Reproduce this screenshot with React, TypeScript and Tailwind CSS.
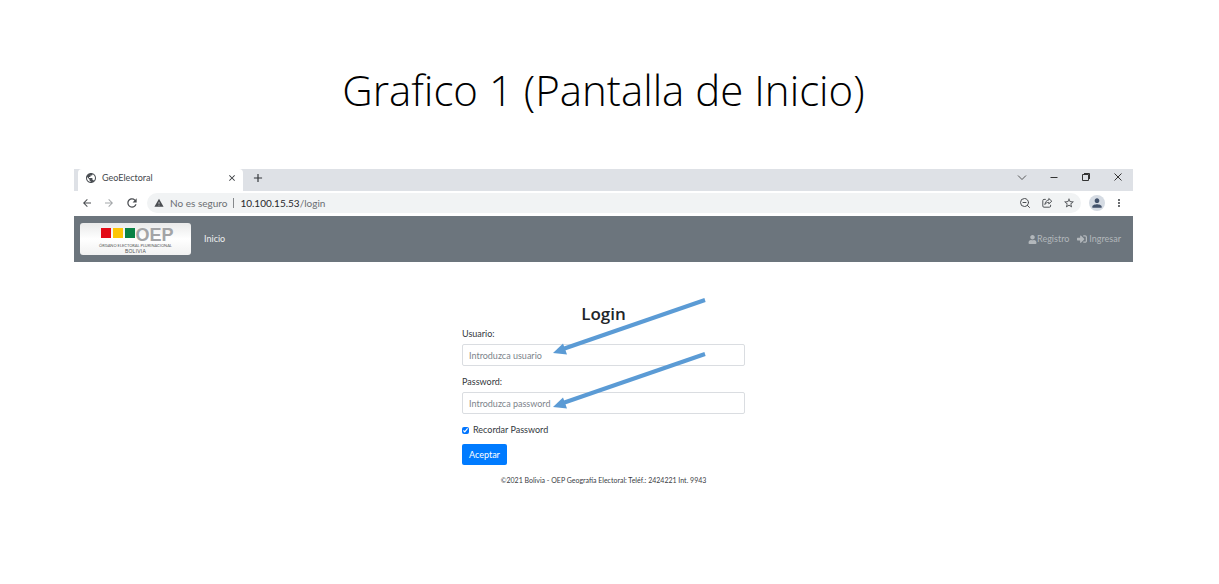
import { useState } from "react";
import {
  MdArrowBack,
  MdArrowForward,
  MdRefresh,
  MdPublic,
  MdClose,
  MdAdd,
  MdWarning,
  MdPerson,
  MdMoreVert,
  MdStarOutline,
} from "react-icons/md";
import { FaSignInAlt, FaUser } from "react-icons/fa";
import { ZoomOut } from "lucide-react";

function ShareIcon() {
  return (
    <svg viewBox="0 0 20 20" className="size-3" fill="none" stroke="currentColor" strokeWidth="1.6">
      <path d="M8 4H5a2 2 0 0 0-2 2v9a2 2 0 0 0 2 2h9a2 2 0 0 0 2-2v-2" />
      <path d="M13 2.5 18 7l-5 4.5V9c-3 0-5 1-6.500 3.500C7 8.500 9 5.500 13 5z" strokeLinejoin="round" />
    </svg>
  );
}

function TabStrip() {
  return (
    <div className="flex h-[22px] items-stretch justify-between bg-[#dee1e6]">
      <div className="flex items-stretch">
        <div className="ml-1 flex w-[165px] items-center rounded-t bg-white pr-1.5 pb-1 pl-[7px]">
          <MdPublic className="size-3 text-[#4b4f54]" />
          <span className="ml-[5px] flex-1 text-[9px] leading-3 text-[#45494d]">GeoElectoral</span>
          <button aria-label="Cerrar" className="text-[#33363a]">
            <MdClose className="size-2.5" />
          </button>
        </div>
        <button aria-label="Nueva pestaña" className="ml-2 pb-1 text-[#33363a]">
          <MdAdd className="size-3.5" />
        </button>
      </div>
      <div className="mr-[9px] mb-1.5 flex items-center gap-5 text-[#333]">
        <button aria-label="Buscar pestañas">
          <svg viewBox="0 0 12 12" className="size-3" fill="none" stroke="currentColor">
            <path d="M2 4.500l4 4 4-4" strokeWidth="0.8" />
          </svg>
        </button>
        <button aria-label="Minimizar">
          <svg viewBox="0 0 12 12" className="size-3" fill="none" stroke="currentColor">
            <path d="M2.500 6.500h7" />
          </svg>
        </button>
        <button aria-label="Restaurar">
          <svg viewBox="0 0 12 12" className="size-3" fill="none" stroke="currentColor">
            <path d="M2.500 3.500h6v6h-6zM4 2.500h5.500v5.500" />
          </svg>
        </button>
        <button aria-label="Cerrar ventana">
          <svg viewBox="0 0 12 12" className="size-3" fill="none" stroke="currentColor">
            <path d="M2.500 2.500l7 7M9.500 2.500l-7 7" />
          </svg>
        </button>
      </div>
    </div>
  );
}

function AddressBar() {
  return (
    <div className="flex h-[25px] items-center bg-white pr-2 pb-px pl-[7px] text-[#4a4d51]">
      <div className="flex items-center gap-2.5">
        <button aria-label="Atrás">
          <MdArrowBack className="size-3" />
        </button>
        <button aria-label="Adelante" className="text-[#a4a7aa]">
          <MdArrowForward className="size-3" />
        </button>
        <button aria-label="Recargar">
          <MdRefresh className="size-3.5" />
        </button>
      </div>
      <div className="ml-2 flex h-5 flex-1 items-center rounded-full bg-[#f1f3f4] pr-1.5 pl-[7px] text-[10px]">
        <MdWarning className="size-2.5" />
        <span className="ml-1.5 whitespace-nowrap text-[#6b6e72]">No es seguro</span>
        <span className="mx-1.5 h-2.5 w-px bg-[#85888b]" />
        <span className="flex-1 text-[#6b6e72]">
          <span className="text-[#26282b]">10.100.15.53</span>/login
        </span>
        <div className="flex items-center gap-2.5">
          <button aria-label="Alejar">
            <ZoomOut className="size-3" />
          </button>
          <button aria-label="Compartir">
            <ShareIcon />
          </button>
          <button aria-label="Favorito">
            <MdStarOutline className="size-3" />
          </button>
        </div>
      </div>
      <button
        aria-label="Perfil"
        className="ml-2 flex size-4 items-center justify-center rounded-full bg-[#d5dbe3] text-[#42526b]"
      >
        <MdPerson className="size-3.5" />
      </button>
      <button aria-label="Menú" className="ml-2">
        <MdMoreVert className="size-3" />
      </button>
    </div>
  );
}

function Brand() {
  return (
    <a
      href="#inicio"
      className="flex h-8 w-[111px] flex-col items-center justify-center rounded-[3px] bg-linear-to-b from-[#e9eaea] via-white to-[#f1f1f1]"
    >
      <span className="mt-0.5 flex h-4 items-center pl-1">
        <span className="mb-1 flex gap-0.5">
          <span className="size-2.5 bg-[#e30b17]" />
          <span className="size-2.5 bg-[#fdc506]" />
          <span className="size-2.5 bg-[#0a8245]" />
        </span>
        <span className="font-['Liberation_Sans',sans-serif] text-[18px] leading-4 font-bold text-[#a3a4a6]">
          OEP
        </span>
      </span>
      <span className="font-['Lato',sans-serif] text-[4px] leading-[5px] whitespace-nowrap text-[#55585a]">
        ÓRGANO ELECTORAL PLURINACIONAL
      </span>
      <span className="font-['Liberation_Sans',sans-serif] text-[5px] leading-[6px] tracking-wider text-[#555]">
        BOLIVIA
      </span>
    </a>
  );
}

function Navbar() {
  return (
    <nav className="flex h-[46px] items-center bg-[#6c757d] pr-3 pl-[6px] text-[9px] text-[#b2b7bb]">
      <Brand />
      <a href="#inicio" className="ml-[13px] flex-1 text-[#eceeef]">
        Inicio
      </a>
      <a href="#registro" className="flex items-center">
        <FaUser className="size-[9px]" />
        Registro
      </a>
      <a href="#ingresar" className="ml-2 flex items-center gap-0.5">
        <FaSignInAlt className="size-[10px]" />
        Ingresar
      </a>
    </nav>
  );
}

function Arrows() {
  return (
    <svg
      viewBox="0 0 156 112"
      aria-hidden="true"
      className="pointer-events-none absolute top-0 left-[91px] h-28 w-[156px]"
      fill="#5b9bd5"
      stroke="#5b9bd5"
    >
      {[0, 54].map((y) => (
        <g key={y} transform={`translate(0 ${y})`}>
          <path d="M152 2 10 51" strokeWidth="4" fill="none" />
          <path d="M0 55 10 45.500 14 56.500z" stroke="none" />
        </g>
      ))}
    </svg>
  );
}

function Field({ id, label, type, placeholder }: { id: string; label: string; type: string; placeholder: string }) {
  return (
    <div className="mb-2.5 flex flex-col">
      <label htmlFor={id} className="mb-1 leading-3">
        {label}
      </label>
      <input
        id={id}
        type={type}
        placeholder={placeholder}
        className="h-[22px] rounded-[2px] border border-[#dadde1] px-1.5 placeholder:text-[#7d848b]"
      />
    </div>
  );
}

function LoginForm() {
  const [remember, setRemember] = useState(true);
  return (
    <form
      onSubmit={(event) => event.preventDefault()}
      className="relative mx-auto mt-9 flex w-full max-w-[283px] flex-col text-[9px] text-[#33383d]"
    >
      <h2 className="mt-1 mb-0.5 text-center font-['Open_Sans',sans-serif] text-[17px] leading-6 font-semibold text-[#212529]">
        Login
      </h2>
      <Field id="usuario" label="Usuario:" type="text" placeholder="Introduzca usuario" />
      <Field id="password" label="Password:" type="password" placeholder="Introduzca password" />
      <label className="flex items-center gap-1 leading-3">
        <input
          type="checkbox"
          checked={remember}
          onChange={(event) => setRemember(event.target.checked)}
          className="size-[7px] accent-[#0075ff]"
        />
        Recordar Password
      </label>
      <button type="submit" className="mt-2 h-[21px] self-start rounded-[2px] bg-[#007bff] px-[7px] text-white">
        Aceptar
      </button>
      <Arrows />
    </form>
  );
}

export default function App() {
  return (
    <main className="min-h-screen bg-white pt-[60px] pr-[86px] pl-[74px] font-['Lato','Open_Sans',sans-serif]">
      <h1 className="text-center font-['Open_Sans',sans-serif] text-[42px] leading-[60px] font-[350] text-black">
        Grafico 1 (Pantalla de Inicio)
      </h1>
      <section className="mt-[49px]">
        <TabStrip />
        <AddressBar />
        <Navbar />
        <LoginForm />
        <footer className="mt-[9px] text-center text-[7px] leading-3 text-[#3b4045]">
          ©2021 Bolivia - OEP Geografía Electoral: Teléf.: 2424221 Int. 9943
        </footer>
      </section>
    </main>
  );
}
